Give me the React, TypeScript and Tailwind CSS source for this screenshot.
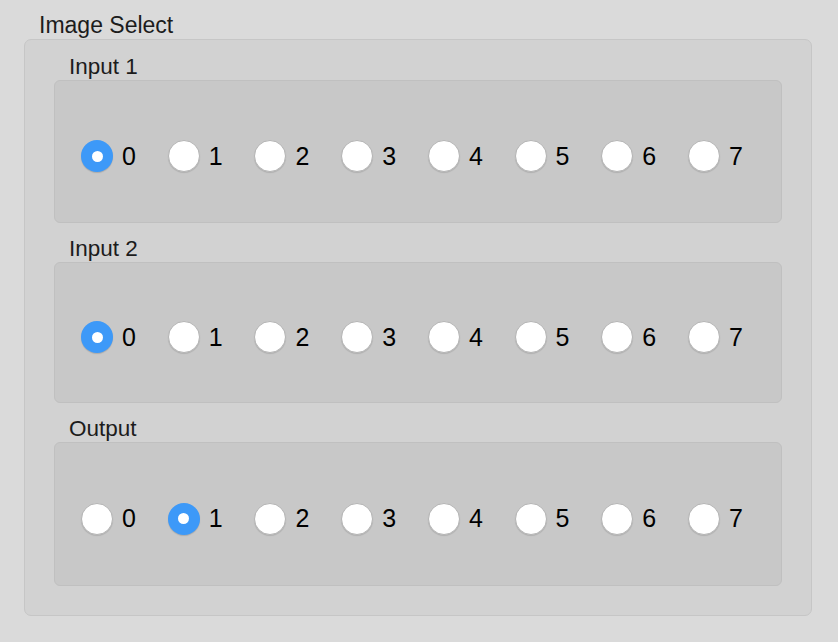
import { useState } from 'react';

const opcoes = [0, 1, 2, 3, 4, 5, 6, 7];

function Radio({ checked, onClick }: { checked: boolean; onClick: () => void }) {
  if (checked) {
    return (
      <button
        type="button"
        onClick={onClick}
        className="w-[32px] h-[32px] rounded-full bg-[#3d99f8] flex items-center justify-center shadow-[0_1px_1px_rgba(0,0,0,0.15)]"
      >
        <span className="w-[11px] h-[11px] rounded-full bg-white block" />
      </button>
    );
  }
  return (
    <button
      type="button"
      onClick={onClick}
      className="w-[32px] h-[32px] rounded-full bg-white border border-[#b4b4b4] shadow-[0_1px_1px_rgba(0,0,0,0.12)]"
    />
  );
}

function Grupo({ titulo, valor, setValor, classe, altura }: { titulo: string; valor: number; setValor: (v: number) => void; classe: string; altura: string }) {
  return (
    <div className={classe}>
      <div className="pl-[15px] text-[22.5px] leading-[26px] text-[#1c1c1c]">{titulo}</div>
      <div className={`${altura} rounded-[6px] bg-[#c8c8c8] border border-[#c0c0c0] flex items-center justify-between pl-[26px] pr-[38px] pt-[9px]`}>
        {opcoes.map((o) => (
          <label key={o} className="flex items-center gap-[9px] cursor-pointer">
            <Radio checked={valor === o} onClick={() => setValor(o)} />
            <span className="text-[25px] leading-none text-black">{o}</span>
          </label>
        ))}
      </div>
    </div>
  );
}

export default function App() {
  const [input1, setInput1] = useState(0);
  const [input2, setInput2] = useState(0);
  const [output, setOutput] = useState(1);

  return (
    <div
      className="w-[838px] h-[642px] bg-[#dadada] px-[24px] pt-[11px]"
      style={{ fontFamily: '"Liberation Sans", Arial, sans-serif' }}
    >
      <div className="pl-[15px] text-[23px] leading-[28px] text-[#1c1c1c]">Image Select</div>
      <div className="w-[788px] rounded-[7px] bg-[#d2d2d2] border border-[#c6c6c6] px-[29px] pt-[14px] pb-[29px]">
        <Grupo titulo="Input 1" valor={input1} setValor={setInput1} classe="" altura="h-[143px]" />
        <Grupo titulo="Input 2" valor={input2} setValor={setInput2} classe="mt-[13px]" altura="h-[141px]" />
        <Grupo titulo="Output" valor={output} setValor={setOutput} classe="mt-[13px]" altura="h-[144px]" />
      </div>
    </div>
  );
}
